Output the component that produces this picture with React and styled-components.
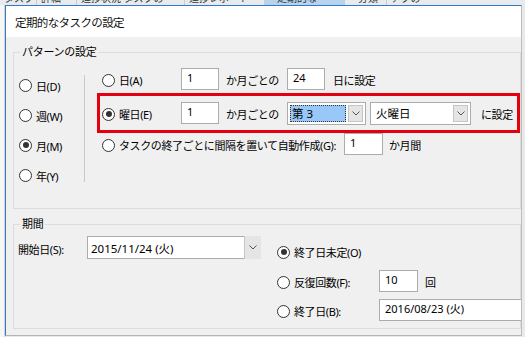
import React from "react";
import styled, { createGlobalStyle } from "styled-components";

const GlobalStyle = createGlobalStyle`
  body {
    margin: 0;
    font-family: "Noto Sans", "Noto Sans CJK JP", sans-serif;
    font-size: 11px;
    color: #000;
  }
`;

const Page = styled.div`
  width: 525px;
  height: 337px;
  display: flex;
  flex-direction: column;
  overflow: hidden;
  background: #e9e9e9;
`;

const AppHeader = styled.div`
  height: 5px;
  display: flex;
  overflow: hidden;
  background: #e7ebf0;
  flex-shrink: 0;
`;

const HeaderCell = styled.div`
  width: ${(p) => p.$w}px;
  flex-shrink: 0;
  height: 5px;
  overflow: hidden;
  padding-left: ${(p) => p.$pad || 4}px;
  box-sizing: border-box;
  background: ${(p) => (p.$active ? "#b7d3f0" : "transparent")};
  border-right: 1px solid #c9ced6;
  color: #333;
  font-size: 10px;
  white-space: nowrap;
  line-height: 12px;
  span {
    display: block;
    margin-top: -8px;
  }
`;

const Main = styled.div`
  flex: 1;
  display: flex;
  min-height: 0;
`;

const Gutter = styled.div`
  width: 5px;
  flex-shrink: 0;
  background: #f6f6f6;
  border-right: 1px solid #d4d4d4;
  box-sizing: border-box;
`;

const Dialog = styled.div`
  width: 517px;
  height: 331px;
  flex-shrink: 0;
  display: flex;
  flex-direction: column;
  background: #f0f0f0;
  border-top: 1px solid #2f7ac6;
  border-left: 1px solid #2f7ac6;
  border-right: 1px solid #bdbdbd;
  border-bottom: 1px solid #b4b4b4;
  box-sizing: border-box;
  overflow: hidden;
`;

const TitleBar = styled.div`
  height: 31px;
  flex-shrink: 0;
  display: flex;
  align-items: center;
  padding-left: 9px;
  background: #fff;
  font-size: 11.5px;
  letter-spacing: -0.6px;
  color: #111;
`;

const Body = styled.div`
  flex: 1;
  padding: 8px 0 0 7px;
  display: flex;
  flex-direction: column;
  gap: 8px;
`;

const Group = styled.fieldset`
  margin: 0;
  padding: 0;
  height: ${(p) => p.$h}px;
  box-sizing: border-box;
  border: 1px solid #dcdcdc;
  min-width: 0;
`;

const GroupTitle = styled.legend`
  margin-left: 6px;
  padding: 0 2px;
  line-height: 14px;
  letter-spacing: -0.3px;
`;

const PatternLayout = styled.div`
  display: flex;
  align-items: flex-start;
`;

const FreqColumn = styled.div`
  width: 67px;
  padding: 11px 0 0 5px;
  display: flex;
  flex-direction: column;
`;

const FreqItem = styled.div`
  height: 30px;
  display: flex;
  align-items: center;
  gap: 4px;
`;

const Radio = styled.span`
  width: 11px;
  height: 11px;
  border-radius: 50%;
  border: 1px solid #333;
  background: #fff;
  flex-shrink: 0;
  display: flex;
  align-items: center;
  justify-content: center;
  &::after {
    content: "";
    width: 6px;
    height: 6px;
    border-radius: 50%;
    background: ${(p) => (p.$checked ? "#333" : "transparent")};
  }
`;

const Divider = styled.div`
  width: 1px;
  height: 107px;
  margin-top: 16px;
  background: #c9c9c9;
`;

const DetailColumn = styled.div`
  margin: 9px 0 0 12px;
  display: flex;
  flex-direction: column;
`;

const OptionRow = styled.div`
  display: flex;
  align-items: center;
  height: ${(p) => (p.$marked ? 40 : 22)}px;
  width: ${(p) => (p.$marked ? "423px" : "auto")};
  box-sizing: border-box;
  padding-left: ${(p) => (p.$marked ? 2 : 5)}px;
  margin-top: ${(p) => (p.$marked ? 3 : 0)}px;
  border: ${(p) => (p.$marked ? "3px solid #e5000f" : "none")};
`;

const OptionLabel = styled.div`
  width: ${(p) => p.$w}px;
  flex-shrink: 0;
  display: flex;
  align-items: center;
  gap: 4px;
  white-space: nowrap;
  letter-spacing: -0.4px;
  padding-top: 2px;
`;

const TextBox = styled.div`
  width: ${(p) => p.$w}px;
  height: 22px;
  box-sizing: border-box;
  flex-shrink: 0;
  background: #fff;
  border: 1px solid #acacac;
  padding: 2px 5px;
  line-height: 14px;
  white-space: nowrap;
  overflow: hidden;
`;

const Caption = styled.span`
  width: ${(p) => (p.$w ? `${p.$w}px` : "auto")};
  flex-shrink: 0;
  margin-left: ${(p) => p.$ml || 0}px;
  white-space: nowrap;
  letter-spacing: -0.4px;
  padding-top: 2px;
`;

const Combo = styled.div`
  width: ${(p) => p.$w}px;
  height: 23px;
  box-sizing: border-box;
  flex-shrink: 0;
  margin-left: ${(p) => p.$ml || 0}px;
  display: flex;
  align-items: stretch;
  background: #fff;
  border: 1px solid #acacac;
  padding: ${(p) => (p.$flat ? 0 : "2px")};
`;

const ComboValue = styled.div`
  flex: 1;
  display: flex;
  align-items: center;
  padding-left: ${(p) => (p.$selected ? 2 : 3)}px;
  margin-right: 2px;
  background: ${(p) => (p.$selected ? "#99c7f7" : "transparent")};
  outline: ${(p) => (p.$selected ? "1px dotted #333" : "none")};
  outline-offset: -1px;
  white-space: nowrap;
  font-size: 11.5px;
`;

const DropButton = styled.div`
  width: ${(p) => (p.$flat ? 17 : 15)}px;
  flex-shrink: 0;
  display: flex;
  align-items: center;
  justify-content: center;
  background: #e5e5e5;
  border: ${(p) => (p.$flat ? "none" : "1px solid #c5c5c5")};
  border-left: 1px solid #c5c5c5;
  margin: ${(p) => (p.$flat ? "-1px -1px -1px 0" : 0)};
  box-sizing: border-box;
`;

const PeriodLayout = styled.div`
  display: flex;
  align-items: flex-start;
  padding-left: 4px;
`;

const StartField = styled.div`
  display: flex;
  align-items: center;
  margin-top: 5px;
`;

const EndColumn = styled.div`
  display: flex;
  flex-direction: column;
  margin: 9px 0 0 16px;
  gap: 7px;
`;

const EndRow = styled.div`
  display: flex;
  align-items: center;
  height: 22px;
  margin-top: ${(p) => p.$mt || 0}px;
`;

const Chevron = () => (
  <svg width="8" height="5" viewBox="0 0 8 5">
    <polyline points="0.5,0.5 4,4 7.5,0.5" fill="none" stroke="#555" strokeWidth="1" />
  </svg>
);

const Option = ({ w, checked, children }) => (
  <OptionLabel $w={w}>
    <Radio $checked={checked} />
    <span>{children}</span>
  </OptionLabel>
);

const SelectBox = ({ w, ml, value, selected }) => (
  <Combo $w={w} $ml={ml}>
    <ComboValue $selected={selected}>{value}</ComboValue>
    <DropButton>
      <Chevron />
    </DropButton>
  </Combo>
);

const frequencies = [
  { label: "日(D)" },
  { label: "週(W)" },
  { label: "月(M)", checked: true },
  { label: "年(Y)" },
];

const headers = [
  { w: 37, text: "タスク" },
  { w: 40, text: "詳細" },
  { w: 108, text: "進捗状況 タスクの" },
  { w: 80, text: "進捗レポート" },
  { w: 80, text: "定期的な", active: true, pad: 12 },
  { w: 42, text: "分類", pad: 13 },
  { w: 140, text: "アクの" },
];

export default function App() {
  return (
    <>
      <GlobalStyle />
      <Page>
        <AppHeader>
          {headers.map((h) => (
            <HeaderCell key={h.text} $w={h.w} $active={h.active} $pad={h.pad}>
              <span>{h.text}</span>
            </HeaderCell>
          ))}
        </AppHeader>
        <Main>
          <Gutter />
          <Dialog>
            <TitleBar>定期的なタスクの設定</TitleBar>
            <Body>
              <Group $h={164}>
                <GroupTitle>パターンの設定</GroupTitle>
                <PatternLayout>
                  <FreqColumn>
                    {frequencies.map((f) => (
                      <FreqItem key={f.label}>
                        <Radio $checked={f.checked} />
                        <Caption>{f.label}</Caption>
                      </FreqItem>
                    ))}
                  </FreqColumn>
                  <Divider />
                  <DetailColumn>
                    <OptionRow>
                      <Option w={79}>日(A)</Option>
                      <TextBox $w={38}>1</TextBox>
                      <Caption $w={61} $ml={7}>か月ごとの</Caption>
                      <TextBox $w={38}>24</TextBox>
                      <Caption $ml={8}>日に設定</Caption>
                    </OptionRow>
                    <OptionRow $marked>
                      <Option w={79} checked>曜日(E)</Option>
                      <TextBox $w={38}>1</TextBox>
                      <Caption $w={61} $ml={7}>か月ごとの</Caption>
                      <SelectBox w={79} value="第 3" selected />
                      <SelectBox w={101} ml={4} value="火曜日" />
                      <Caption $ml={10}>に設定</Caption>
                    </OptionRow>
                    <OptionRow>
                      <Option w={242}>タスクの終了ごとに間隔を置いて自動作成(G):</Option>
                      <TextBox $w={39}>1</TextBox>
                      <Caption $ml={6}>か月間</Caption>
                    </OptionRow>
                  </DetailColumn>
                </PatternLayout>
              </Group>

              <Group $h={112}>
                <GroupTitle>期間</GroupTitle>
                <PeriodLayout>
                  <StartField>
                    <Caption $w={69}>開始日(S):</Caption>
                    <Combo $w={174} $flat>
                      <ComboValue>2015/11/24 (火)</ComboValue>
                      <DropButton $flat>
                        <Chevron />
                      </DropButton>
                    </Combo>
                  </StartField>
                  <EndColumn>
                    <EndRow>
                      <Option w={102} checked>終了日未定(O)</Option>
                    </EndRow>
                    <EndRow $mt={1}>
                      <Option w={102}>反復回数(F):</Option>
                      <TextBox $w={39}>10</TextBox>
                      <Caption $ml={7}>回</Caption>
                    </EndRow>
                    <EndRow>
                      <Option w={102}>終了日(B):</Option>
                      <TextBox $w={160}>2016/08/23 (火)</TextBox>
                    </EndRow>
                  </EndColumn>
                </PeriodLayout>
              </Group>
            </Body>
          </Dialog>
        </Main>
      </Page>
    </>
  );
}
